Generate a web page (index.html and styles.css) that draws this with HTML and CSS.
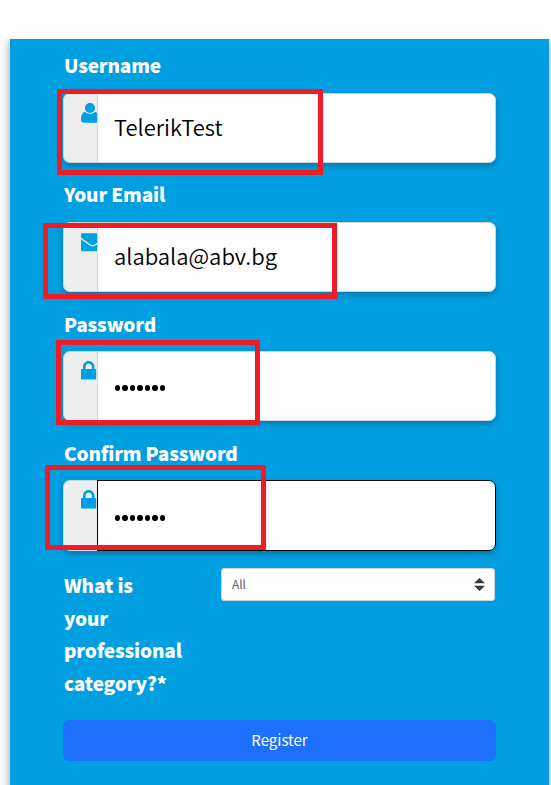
FILE: index.html
```html
<!DOCTYPE html>
<html lang="en">
<head>
<meta charset="utf-8">
<title>Register</title>
<link rel="stylesheet" href="styles.css">
</head>
<body>
<svg class="defs" aria-hidden="true">
  <symbol id="lock" viewBox="0 0 16 19"><path fill-rule="evenodd" d="M2 8V6C2 2.500 4.500 0 7.700 0s5.800 2.500 5.800 6v2h.7c.6 0 1 .4 1 1v8.500c0 .6-.4 1-1 1H1c-.6 0-1-.4-1-1V9c0-.6.4-1 1-1zM4.600 8h6.300V6c0-2.200-1.300-3.600-3.200-3.600S4.600 3.800 4.600 6z"/></symbol>
</svg>
<main class="panel">
  <form class="form">
    <div class="group">
      <label class="label">Username</label>
      <div class="field">
        <span class="addon"><svg class="icon" viewBox="0 0 18 20"><circle cx="9" cy="5" r="5"/><path d="M4 8.800C1.200 9.600 0 12.500 0 16.300c0 2.200 1.200 3.400 3 3.400h12c1.800 0 3-1.200 3-3.400 0-3.800-1.200-6.700-4-7.500-2.800 2.700-7.200 2.700-10 0z"/></svg></span>
        <div class="input">TelerikTest</div>
      </div>
    </div>
    <div class="group">
      <label class="label">Your Email</label>
      <div class="field">
        <span class="addon"><svg class="icon" viewBox="0 0 18 20"><path d="M0 2.800C0 1.900.6 1.300 1.400 1.300H20V8l-6.500 4.500c-1.500 1-2.500 1-4 0L1.500 6.800C.5 6 0 5 0 4.200zM0 7.300c3 2.200 5 3.700 8 5.800 2.500 1.800 4.500 1.800 7 0L20 9.500v9.800H1.400C.6 19.300 0 18.700 0 17.800z"/></svg></span>
        <div class="input">alabala@abv.bg</div>
      </div>
    </div>
    <div class="group">
      <label class="label label-low">Password</label>
      <div class="field">
        <span class="addon"><svg class="icon lock"><use href="#lock"/></svg></span>
        <div class="input"><span class="dots"><i></i><i></i><i></i><i></i><i></i><i></i><i></i></span></div>
      </div>
    </div>
    <div class="group">
      <label class="label label-low">Confirm Password</label>
      <div class="field field-tall">
        <span class="addon"><svg class="icon lock"><use href="#lock"/></svg></span>
        <div class="input focused"><span class="dots"><i></i><i></i><i></i><i></i><i></i><i></i><i></i></span></div>
      </div>
    </div>
    <div class="category">
      <label class="question">What is your professional category?*</label>
      <div class="select"><span>All</span><svg class="arrows" viewBox="0 0 11 13"><path d="M5.500 0 11 5.300H0zM0 7.700h11L5.500 13z"/></svg></div>
    </div>
    <button class="register" type="button">Register</button>
  </form>
</main>
<div class="mark mark-username"></div>
<div class="mark mark-email"></div>
<div class="mark mark-password"></div>
<div class="mark mark-confirm"></div>
</body>
</html>
```
FILE: styles.css
```css
* { box-sizing: border-box; }
body {
  margin: 0;
  height: 785px;
  overflow: hidden;
  padding: 39px 2px 0 10px;
  background: #fff;
  font-family: "Source Sans Pro", "Noto Sans CJK SC", sans-serif;
}
.defs { position: absolute; width: 0; height: 0; }
.panel {
  height: 760px;
  padding: 11px 53px 0;
  background: #009fe1;
  box-shadow: 0 0 10px rgba(0, 0, 0, .4);
  clip-path: inset(0 -10px);
}
.group { height: 129px; }
.label {
  display: block;
  height: 43px;
  padding-left: 1px;
  line-height: 30px;
  font-size: 19px;
  font-weight: 900;
  letter-spacing: -.15px;
  color: #fff;
}
.label-low { line-height: 32px; }
.field {
  display: flex;
  width: 433px;
  height: 70px;
  border-radius: 7px;
  box-shadow: 0 3px 6px rgba(0, 0, 0, .25);
}
.field-tall { height: 71px; }
.addon {
  width: 34px;
  padding: 9px 0 0 17px;
  overflow: hidden;
  background: #eee;
  border: 1px solid #ced4da;
  border-right: 0;
  border-radius: 7px 0 0 7px;
}
.icon { display: block; width: 18px; height: 20px; fill: #009fe1; }
.lock { width: 16px; height: 19px; }
.input {
  flex: 1;
  display: flex;
  align-items: center;
  padding: 0 0 5px 16px;
  background: #fff;
  border: 1px solid #ced4da;
  border-radius: 0 7px 7px 0;
  font-size: 22px;
  font-weight: 350;
  color: #000;
}
.focused { border-color: #000; }
.dots { display: flex; gap: 2px; padding: 9px 0 0 .5px; }
.dots i { width: 5.500px; height: 6px; border-radius: 50%; background: #000; }
.category {
  display: flex;
  justify-content: space-between;
  width: 432px;
  height: 154px;
  padding-top: 2px;
}
.question {
  width: 112px;
  padding: 1px 0 0 1px;
  font-size: 19px;
  line-height: 32.500px;
  font-weight: 900;
  letter-spacing: -.15px;
  color: #fff;
}
.select {
  display: flex;
  justify-content: space-between;
  align-items: center;
  width: 274px;
  height: 33px;
  padding: 0 9px 2px 10px;
  background: #fff;
  border: 1px solid #ced4da;
  border-radius: 3px;
  font-size: 12px;
  font-weight: 350;
  color: #495057;
}
.arrows { width: 11px; height: 13px; margin-top: 1px; fill: #343a40; }
.register {
  display: block;
  width: 433px;
  height: 41px;
  padding: 0 0 2px;
  border: 0;
  border-radius: 6px;
  background: #1f6fff;
  color: #fff;
  font: 400 15px/39px "Source Sans Pro", "Noto Sans CJK SC", sans-serif;
}
.mark { position: absolute; border: 5px solid #ee1c25; }
.mark-username { left: 57px; top: 89px; width: 266px; height: 86px; }
.mark-email { left: 43px; top: 223px; width: 294px; height: 76px; }
.mark-password { left: 56px; top: 340px; width: 204px; height: 85px; }
.mark-confirm { left: 45px; top: 465px; width: 221px; height: 85px; }
```
